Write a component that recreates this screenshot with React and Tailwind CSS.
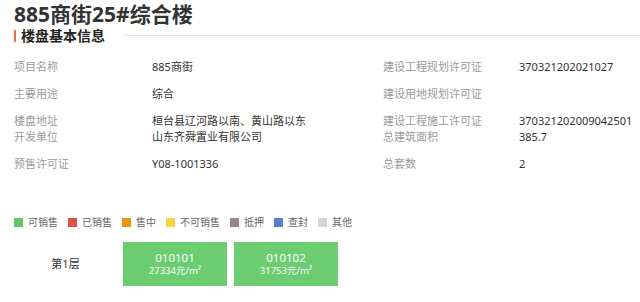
const FONT = { fontFamily: '"Noto Sans", "Noto Sans CJK SC", sans-serif' };

const rows = [
  { l1: ['项目名称'], v1: ['885商街'], l2: ['建设工程规划许可证'], v2: ['370321202021027'] },
  { l1: ['主要用途'], v1: ['综合'], l2: ['建设用地规划许可证'], v2: [''] },
  {
    l1: ['楼盘地址', '开发单位'],
    v1: ['桓台县辽河路以南、黄山路以东', '山东齐舜置业有限公司'],
    l2: ['建设工程施工许可证', '总建筑面积'],
    v2: ['370321202009042501', '385.7'],
  },
  { l1: ['预售许可证'], v1: ['Y08-1001336'], l2: ['总套数'], v2: ['2'] },
];

const legend = [
  { name: '可销售', color: 'bg-[#5fc763]' },
  { name: '已销售', color: 'bg-[#dc514c]' },
  { name: '售中', color: 'bg-[#ee9412]' },
  { name: '不可销售', color: 'bg-[#f8d648]' },
  { name: '抵押', color: 'bg-[#9c8387]' },
  { name: '查封', color: 'bg-[#5a7fcd]' },
  { name: '其他', color: 'bg-[#d5d5d5]' },
];

const units = [
  { code: '010101', price: '27334元/m²' },
  { code: '010102', price: '31753元/m²' },
];

function Cell({ lines, className }) {
  return (
    <div className={className}>
      {lines.map((t, i) => (
        <div key={i} className="leading-4 h-4 whitespace-nowrap">{t}</div>
      ))}
    </div>
  );
}

export default function App() {
  return (
    <div className="w-[640px] h-[302px] bg-white overflow-hidden" style={FONT}>
      <div className="pl-[14px] pt-[1px] h-[28px] leading-[26px] text-[21px] font-bold text-[#333]">
        885商街25#综合楼
      </div>
      <div className="flex items-center h-[15px] pl-[14px]">
        <div className="w-[2px] h-[12px] bg-[#ea6f5a]"></div>
        <div className="ml-[5px] text-[14px] leading-[15px] font-bold text-[#222]">楼盘基本信息</div>
        <div className="flex-1 h-px bg-[#e6e6e6] ml-[20px] -mt-[1px]"></div>
      </div>

      <div className="mt-[10px] pl-[14px] text-[11px]">
        {rows.map((r, i) => (
          <div key={i} className="flex items-center py-[5.5px]">
            <Cell lines={r.l1} className="w-[138px] text-[#9a9a9a]" />
            <Cell lines={r.v1} className="w-[231px] text-[#333]" />
            <Cell lines={r.l2} className="w-[136px] text-[#9a9a9a]" />
            <Cell lines={r.v2} className="flex-1 text-[#333]" />
          </div>
        ))}
      </div>

      <div className="mt-[37px] pl-[14px] flex items-center h-4 gap-[10px] text-[10px] text-[#666]">
        {legend.map((it) => (
          <div key={it.name} className="flex items-center gap-[5px]">
            <span className={`w-[9px] h-[9px] ${it.color}`}></span>
            <span>{it.name}</span>
          </div>
        ))}
      </div>

      <div className="mt-[12px] pl-[14px] flex items-center">
        <div className="w-[103px] text-center text-[11px] text-[#333]">第1层</div>
        <div className="ml-[6px] flex gap-[7px]">
          {units.map((u) => (
            <div
              key={u.code}
              className="w-[104px] h-[44px] bg-[#6bcd70] text-white flex flex-col items-center justify-center"
            >
              <div className="text-[11.5px] leading-[14px]">{u.code}</div>
              <div className="text-[9.5px] leading-[12px]">{u.price}</div>
            </div>
          ))}
        </div>
      </div>
    </div>
  );
}
